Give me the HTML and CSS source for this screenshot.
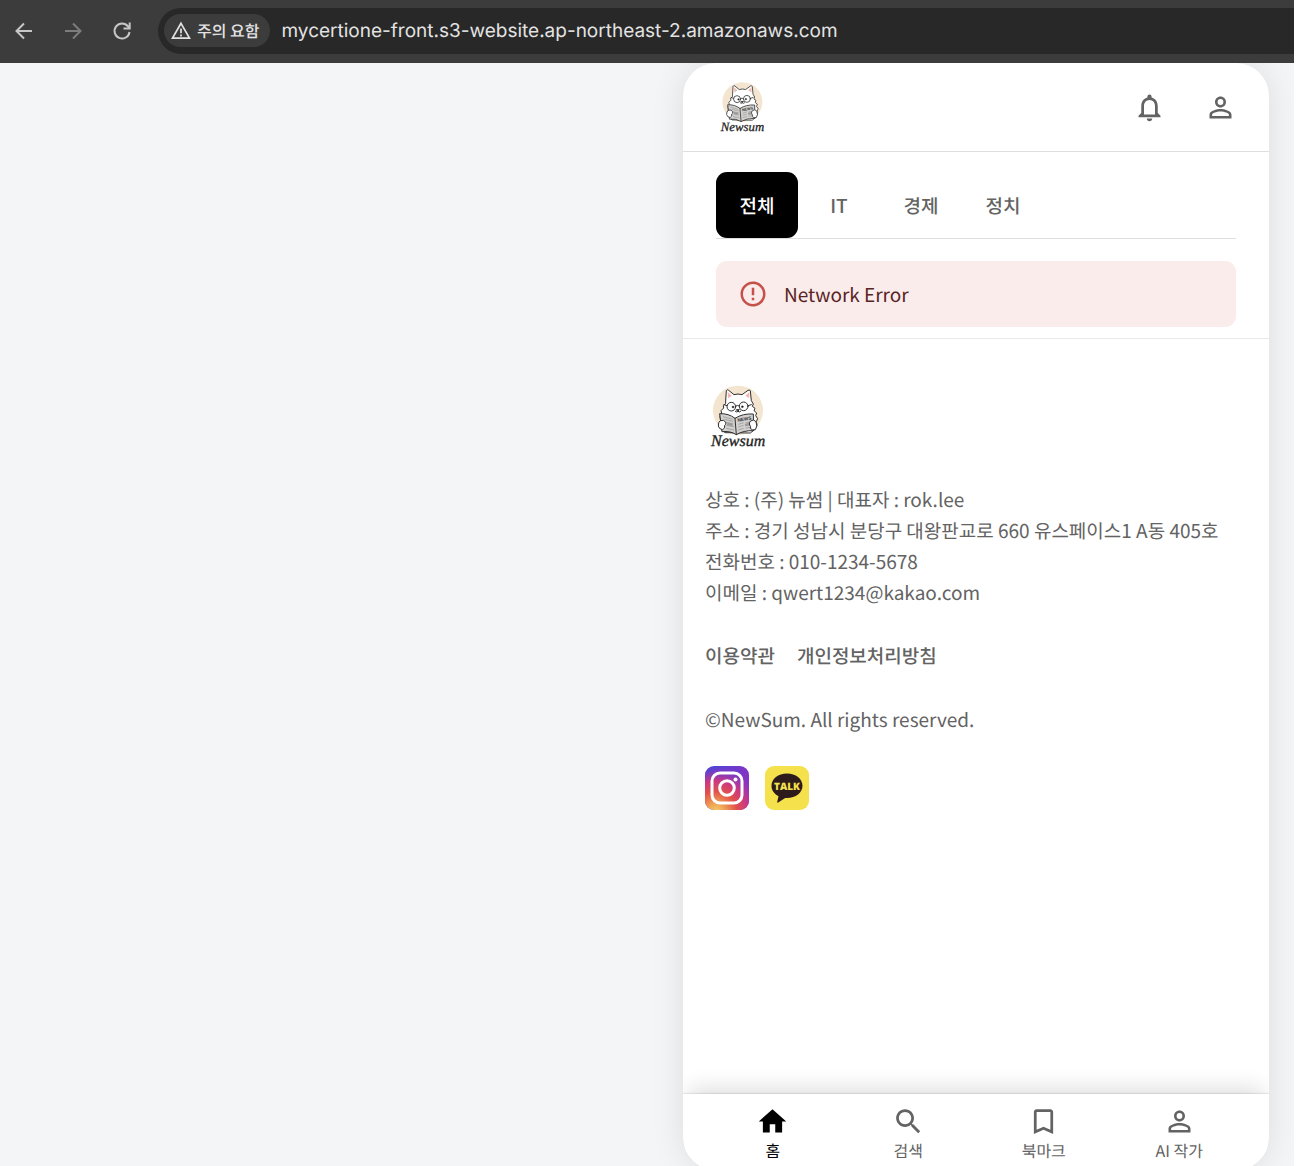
FILE: index.html
```html
<!DOCTYPE html>
<html lang="en">
<head>
<meta charset="utf-8">
<meta name="viewport" content="width=device-width, initial-scale=1">
<title>Newsum</title>
<link rel="stylesheet" href="styles.css">
</head>
<body>
<svg class="defs" width="0" height="0" aria-hidden="true">
  <defs>
    <symbol id="newsum-logo" viewBox="60 41 165 195">
      <ellipse cx="144" cy="120" rx="75" ry="74" fill="#f3e5cf"/>
      <g stroke="#302e30" stroke-width="3" stroke-linejoin="round" stroke-linecap="round">
        <path fill="#fff" d="M107 91 L109 61 Q111 56 116 60 L132 73 Q144 69 156 73 L174 60 Q180 57 181 62 L184 91 L190 101 L187 108 L195 114 L192 121 L200 128 L197 136 L203 145 L199 154 L201 164 L196 176 L181 188 L105 187 L94 176 L88 161 L92 149 L90 139 L95 128 L93 121 L101 113 L100 105 L106 101 Z"/>
        <path fill="#f1b9b2" stroke="none" d="M113 65 L126 76 L114 84 Z M178 65 L166 76 L178 84 Z"/>
        <circle cx="124" cy="109" r="13" fill="#fff"/>
        <circle cx="161" cy="108" r="13" fill="#fff"/>
        <path fill="none" d="M137 107 Q142 103 148 107 M111 106 L102 103 M174 106 L184 103 M136 123 Q141 127 144 123 Q148 127 152 123"/>
        <circle cx="129" cy="110" r="3" fill="#222" stroke-width="1"/>
        <circle cx="157" cy="109" r="3" fill="#222" stroke-width="1"/>
        <path d="M140 118 L148 118 L144 122 Z" fill="#222"/>
        <path fill="#d2d1cf" d="M90 130 Q116 129 135 144 Q158 129 190 131 L191 181 Q160 180 139 193 Q121 181 97 184 Z"/>
        <path fill="none" d="M135 144 L139 193"/>
      </g>
      <g fill="none" stroke="#8c8c8e" stroke-width="2">
        <path d="M99 139 L128 147 M103 147 L129 153 M108 156 L130 161 M109 165 L132 169 M109 174 L132 179 M145 162 L161 157 M145 170 L161 165 M145 179 L161 174 M167 157 L181 155 M167 165 L181 163 M167 173 L181 171"/>
        <path stroke="#9c9c9e" stroke-width="8" d="M112 160 L128 164 M165 164 L181 161"/>
      </g>
      <text class="logo-news" x="143" y="154" transform="rotate(-9 143 154)">NEWS</text>
      <g fill="#fff" stroke="#302e30" stroke-width="3">
        <path d="M91 151 Q102 146 108 157 Q108 163 104 165 Q106 174 98 178 Q87 177 85 167 Q84 156 91 151 Z"/>
        <path d="M182 152 Q191 145 198 154 Q204 168 196 178 Q186 181 181 174 Q184 169 179 164 Q176 157 182 152 Z"/>
      </g>
      <text class="logo-name" x="63" y="227">Newsum</text>
    </symbol>
    <symbol id="person" viewBox="0 0 24 24">
      <path d="M12 5.9a2.1 2.1 0 1 1 0 4.2 2.1 2.1 0 0 1 0-4.2m0 9c2.97 0 6.1 1.46 6.1 2.1v1.1H5.9V17c0-.64 3.13-2.1 6.1-2.1M12 4C9.79 4 8 5.79 8 8s1.79 4 4 4 4-1.79 4-4-1.79-4-4-4m0 9c-2.67 0-8 1.34-8 4v3h16v-3c0-2.66-5.33-4-8-4"/>
    </symbol>
  </defs>
</svg>

<header class="toolbar">
  <button class="tool" type="button" aria-label="뒤로">
    <svg width="20" height="20" viewBox="0 0 20 20"><path d="M18 10H3M10 2.500 2.500 10l7.500 7.500" fill="none" stroke="currentColor" stroke-width="2"/></svg>
  </button>
  <button class="tool tool-off" type="button" aria-label="앞으로">
    <svg width="20" height="20" viewBox="0 0 20 20"><path d="M2 10h15M10 2.500 17.500 10 10 17.500" fill="none" stroke="currentColor" stroke-width="2"/></svg>
  </button>
  <button class="tool" type="button" aria-label="새로고침">
    <svg width="20" height="20" viewBox="0 0 20 20"><path d="M17.500 11A7.500 7.500 0 1 1 16 5.400L17.500 7M17.700 1.500V7.400H11.500" fill="none" stroke="currentColor" stroke-width="2"/></svg>
  </button>
  <div class="address">
    <button class="security" type="button">
      <svg width="20" height="20" viewBox="0 0 20 20"><path d="M10 2.300 18.500 17.200H1.500Z" fill="none" stroke="currentColor" stroke-width="1.700"/><path d="M10 7.500v4.800M10 13.500v2" stroke="currentColor" stroke-width="1.700"/></svg>
      <span>주의 요함</span>
    </button>
    <input class="url" type="text" aria-label="주소" value="mycertione-front.s3-website.ap-northeast-2.amazonaws.com">
  </div>
</header>

<div class="stage">
  <div class="app">
    <header class="app-header">
      <a class="logo-link" href="#" aria-label="Newsum"><svg class="logo-small"><use href="#newsum-logo"/></svg></a>
      <div class="header-actions">
        <button class="icon-button" type="button" aria-label="알림">
          <svg class="icon" viewBox="0 0 24 24"><path d="M12 22c1.100 0 2-.9 2-2h-4c0 1.100.9 2 2 2m6-6v-5c0-3.070-1.630-5.640-4.500-6.320V4c0-.83-.67-1.500-1.500-1.500s-1.500.67-1.500 1.500v.68C7.640 5.360 6 7.920 6 11v5l-2 2v1h16v-1zm-2 1H8v-6c0-2.480 1.510-4.500 4-4.500s4 2.020 4 4.500z"/></svg>
        </button>
        <button class="icon-button" type="button" aria-label="내 정보">
          <svg class="icon"><use href="#person"/></svg>
        </button>
      </div>
    </header>

    <main class="feed">
      <div class="tabs" role="tablist">
        <button class="tab tab-active" type="button" role="tab" aria-selected="true">전체</button>
        <button class="tab" type="button" role="tab" aria-selected="false">IT</button>
        <button class="tab" type="button" role="tab" aria-selected="false">경제</button>
        <button class="tab" type="button" role="tab" aria-selected="false">정치</button>
      </div>
      <div class="alert" role="alert">
        <svg class="alert-icon" viewBox="0 0 24 24"><path d="M11 15h2v2h-2zm0-8h2v6h-2zm.99-5C6.470 2 2 6.480 2 12s4.470 10 9.990 10C17.520 22 22 17.520 22 12S17.520 2 11.990 2M12 20c-4.420 0-8-3.580-8-8s3.580-8 8-8 8 3.580 8 8-3.580 8-8 8"/></svg>
        <span>Network Error</span>
      </div>
    </main>

    <footer class="company">
      <svg class="logo-large" role="img" aria-label="Newsum"><use href="#newsum-logo"/></svg>
      <address class="details">
        상호 : (주) 뉴썸 | 대표자 : rok.lee<br>
        주소 : 경기 성남시 분당구 대왕판교로 660 유스페이스1 A동 405호<br>
        전화번호 : 010-1234-5678<br>
        이메일 : qwert1234@kakao.com
      </address>
      <nav class="policies">
        <a href="#">이용약관</a>
        <a href="#">개인정보처리방침</a>
      </nav>
      <p class="copyright">©NewSum. All rights reserved.</p>
      <div class="social">
        <a href="#" aria-label="Instagram">
          <svg width="44" height="44" viewBox="0 0 44 44">
            <defs>
              <linearGradient id="ig-base" x1="0" y1="0" x2="1" y2="0.200"><stop offset="0" stop-color="#4047dc"/><stop offset="1" stop-color="#8533c4"/></linearGradient>
              <radialGradient id="ig-warm" cx=".25" cy="1.050" r="1.050"><stop offset="0" stop-color="#f4d16a"/><stop offset=".2" stop-color="#efa154"/><stop offset=".45" stop-color="#e2504c"/><stop offset=".68" stop-color="#cb3881"/><stop offset="1" stop-color="#9b35bd" stop-opacity="0"/></radialGradient>
            </defs>
            <rect width="44" height="44" rx="9" fill="url(#ig-base)"/>
            <rect width="44" height="44" rx="9" fill="url(#ig-warm)"/>
            <rect x="7" y="7" width="30" height="30" rx="8" fill="none" stroke="#fff" stroke-width="3"/>
            <circle cx="22" cy="22" r="7.300" fill="none" stroke="#fff" stroke-width="3"/>
            <circle cx="30.500" cy="13.500" r="2" fill="#fff"/>
          </svg>
        </a>
        <a href="#" aria-label="KakaoTalk">
          <svg width="44" height="44" viewBox="0 0 44 44">
            <rect width="44" height="44" rx="9" fill="#f5e14b"/>
            <path fill="#2d1b1c" d="M22 7.500C13.200 7.500 6.500 12.800 6.500 19.700c0 4.500 2.700 8.200 7 10.500L12.200 36c-.1.700.5 1 1 .6l7-4.700L22 32c8.800 0 15.500-5.400 15.500-12.300S30.800 7.500 22 7.500"/>
            <text class="talk" x="22" y="24" text-anchor="middle">TALK</text>
          </svg>
        </a>
      </div>
    </footer>

    <nav class="bottom-nav">
      <a class="nav-item nav-active" href="#"><svg class="icon" viewBox="0 0 24 24"><path d="M10 20v-6h4v6h5v-8h3L12 3 2 12h3v8z"/></svg>홈</a>
      <a class="nav-item" href="#"><svg class="icon" viewBox="0 0 24 24"><path d="M15.500 14h-.79l-.28-.27C15.410 12.590 16 11.110 16 9.500 16 5.910 13.090 3 9.500 3S3 5.910 3 9.500 5.910 16 9.500 16c1.610 0 3.090-.59 4.230-1.570l.27.28v.79l5 4.990L20.490 19zm-6 0C7.010 14 5 11.990 5 9.500S7.010 5 9.500 5 14 7.010 14 9.500 11.990 14 9.500 14"/></svg>검색</a>
      <a class="nav-item" href="#"><svg class="icon" viewBox="0 0 24 24"><path d="M17 3H7c-1.100 0-1.990.9-1.990 2L5 21l7-3 7 3V5c0-1.100-.9-2-2-2m0 15-5-2.180L7 18V5h10z"/></svg>북마크</a>
      <a class="nav-item" href="#"><svg class="icon"><use href="#person"/></svg>AI 작가</a>
    </nav>
  </div>
</div>
</body>
</html>
```

FILE: styles.css
```css
*,
*::before,
*::after {
  box-sizing: border-box;
}

body {
  display: flex;
  flex-direction: column;
  height: 100vh;
  margin: 0;
  padding-right: 4px;
  overflow: hidden;
  background: #fff;
  color: #636363;
  font-family: "Noto Sans CJK JP", "Noto Sans CJK KR", sans-serif;
  font-size: 19px;
  text-rendering: geometricPrecision;
}

button,
input {
  padding: 0;
  border: 0;
  background: none;
  color: inherit;
  font: inherit;
  text-rendering: inherit;
}

a {
  color: inherit;
  text-decoration: none;
}

svg {
  display: block;
  flex: none;
}

.defs {
  position: absolute;
}

/* Browser toolbar */
.toolbar {
  display: flex;
  flex: none;
  align-items: center;
  gap: 29px;
  height: 63px;
  padding-left: 14px;
  padding-bottom: 2px;
  background: #3c3c3c;
  color: #c7c7c7;
}

.tool-off {
  color: #7d7d7d;
}

.address {
  display: flex;
  flex: 1;
  align-items: center;
  gap: 11px;
  height: 46px;
  margin-left: -3px;
  padding-left: 6px;
  border-radius: 23px 0 0 23px;
  background: #282828;
  color: #e3e3e3;
}

.security {
  display: flex;
  align-items: center;
  gap: 6px;
  height: 33px;
  padding: 0 11px 0 7px;
  border-radius: 17px;
  background: #3c3c3c;
  font-size: 16px;
  font-weight: 500;
  line-height: 20px;
  white-space: nowrap;
}

.security span {
  padding-bottom: 2px;
}

.url {
  flex: 1;
  min-width: 0;
  font-family: Inter, sans-serif;
  font-size: 19px;
}

/* App frame */
.stage {
  display: grid;
  flex: 1;
  grid-template-columns: 683fr 586fr 25fr;
  min-height: 0;
  overflow: hidden;
  background: #f4f5f7;
}

.app {
  display: flex;
  grid-column: 2;
  flex-direction: column;
  height: calc(100% + 4px);
  overflow: hidden;
  border-radius: 33px;
  background: #fff;
  box-shadow: 0 0 33px rgba(0, 0, 0, 0.1);
}

.icon {
  width: 33px;
  height: 33px;
  fill: currentColor;
}

.app-header {
  display: flex;
  flex: none;
  align-items: center;
  justify-content: space-between;
  height: 89px;
  padding: 0 32px 0 37px;
  border-bottom: 1px solid #dedede;
}

.logo-small {
  width: 44px;
  height: 52px;
}

.logo-large {
  width: 55px;
  height: 65px;
  margin-left: 5px;
}

.logo-name {
  fill: #222;
  stroke: #222;
  stroke-width: 1px;
  font: italic 400 48px "Liberation Serif", serif;
}

.logo-news {
  fill: #333;
  font: 700 14px "Liberation Sans", sans-serif;
}

.header-actions {
  display: flex;
  gap: 38px;
}

.feed {
  flex: none;
  padding: 20px 33px 11px;
}

.tabs {
  display: flex;
  border-bottom: 1px solid #dedede;
}

.tab {
  width: 82px;
  height: 66px;
  border-radius: 11px;
  font-weight: 500;
}

.tab-active {
  background: #000;
  color: #fff;
}

.alert {
  display: flex;
  align-items: center;
  gap: 16px;
  height: 66px;
  margin-top: 22px;
  padding: 0 22px;
  border-radius: 11px;
  background: #f9eceb;
  color: #592424;
}

.alert-icon {
  width: 30px;
  height: 30px;
  fill: #c6504a;
}

.company {
  flex: 1;
  min-height: 0;
  padding: 45px 22px 0;
  border-top: 1px solid #e9e9e9;
}

.details {
  margin-top: 35px;
  font-style: normal;
  line-height: 31px;
}

.policies {
  display: flex;
  gap: 22px;
  margin-top: 33px;
  font-weight: 500;
  line-height: 30px;
}

.copyright {
  margin: 34px 0 31px;
  line-height: 30px;
}

.social {
  display: flex;
  gap: 16px;
}

.talk {
  fill: #f5e14b;
  font: 800 10px "Open Sans", sans-serif;
}

.bottom-nav {
  display: flex;
  flex: none;
  justify-content: center;
  height: 76px;
  padding: 11px 22px 0;
  background: #fff;
  box-shadow: 0 -11px 22px -6px rgba(0, 0, 0, 0.14), 0 -1px 1px rgba(0, 0, 0, 0.08);
}

.nav-item {
  display: flex;
  flex: 1;
  flex-direction: column;
  align-items: center;
  font-size: 16px;
  line-height: 24px;
}

.nav-active {
  color: #000;
}
```
